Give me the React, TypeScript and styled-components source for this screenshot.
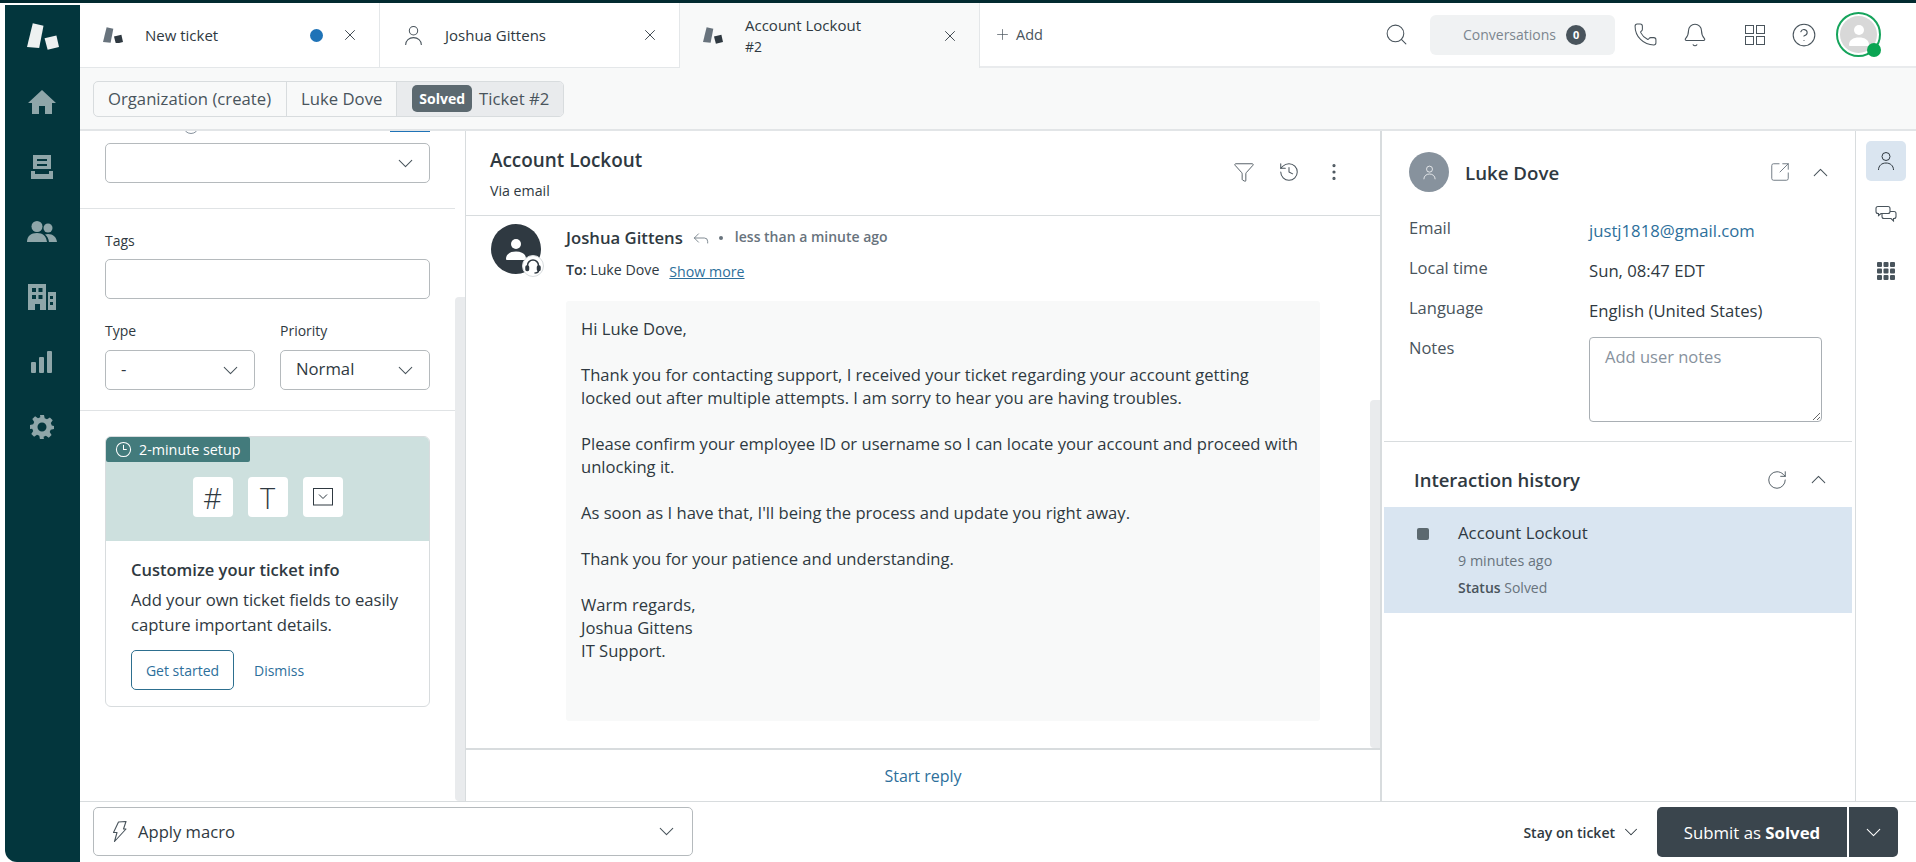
import styled, { createGlobalStyle } from 'styled-components'
import {
  Bell,
  ChevronDown,
  ChevronUp,
  CircleHelp,
  Clock3,
  EllipsisVertical,
  Funnel,
  History,
  Phone,
  Plus,
  Reply,
  RotateCw,
  Search,
  SquareArrowOutUpRight,
  X,
} from 'lucide-react'

const GlobalStyle = createGlobalStyle`
  html, body {
    margin: 0;
    padding: 0;
    background: #fff;
    overflow: hidden;
  }
  * {
    box-sizing: border-box;
  }
  body {
    font-family: 'Open Sans', 'Noto Sans', 'Liberation Sans', sans-serif;
    color: #2f3941;
  }
`

function ZendeskLogo({ size = 20, tall = '#68737d', small = '#2f3941' }) {
  return (
    <svg width={size} height={size * 0.84} viewBox="0 0 31 26">
      <polygon points="5.6,0.3 16,2.7 11.8,24.3 0,23.3" fill={tall} />
      <polygon points="17,14.7 28.5,12 31,23.3 20,26" fill={small} />
    </svg>
  )
}

function PersonIcon({ size = 20, color = '#49545c' }) {
  return (
    <svg width={size} height={size} viewBox="0 0 20 20" fill="none" stroke={color} strokeWidth="1">
      <circle cx="10" cy="5.5" r="4" />
      <path d="M2.5 19c0-4.4 3.3-7 7.5-7s7.5 2.6 7.5 7" />
    </svg>
  )
}

function FourSquares() {
  return (
    <svg width="20" height="20" viewBox="0 0 20 20" fill="none" stroke="#49545c" strokeWidth="1">
      <rect x="0.5" y="0.5" width="8" height="8" />
      <rect x="11.5" y="0.5" width="8" height="8" />
      <rect x="0.5" y="11.5" width="8" height="8" />
      <rect x="11.5" y="11.5" width="8" height="8" />
    </svg>
  )
}

const navFill = '#8fa6a9'

function HomeIcon() {
  return (
    <svg width="30" height="26" viewBox="0 0 30 26" fill={navFill}>
      <path d="M15 1 L29 14 H25 V25 H18 V17 H12 V25 H5 V14 H1 Z" />
    </svg>
  )
}

function ViewsIcon() {
  return (
    <svg width="22" height="24" viewBox="0 0 22 24" fill={navFill}>
      <path d="M2 0h18v14H2z M0 16h4v3h14v-3h4v8H0z" />
      <path d="M6 4h10v2H6zM6 9h10v2H6z" fill="#03363d" />
    </svg>
  )
}

function PeopleIcon() {
  return (
    <svg width="30" height="22" viewBox="0 0 30 22" fill={navFill}>
      <circle cx="10" cy="5.5" r="5.5" />
      <circle cx="21" cy="7" r="4.5" />
      <path d="M0 21c0-6 4-9 10-9s9 3 10 9z" />
      <path d="M21 13c5 0 8.500 3 9 8h-8c-.4-3-1.600-5.500-4-7.400 1-.4 2-.6 3-.6z" />
    </svg>
  )
}

function BuildingIcon() {
  return (
    <svg width="28" height="26" viewBox="0 0 28 26" fill={navFill}>
      <path d="M0 0h18v26h-6v-6H7v6H0z" />
      <path d="M20 8h8v18h-8z" />
      <path
        d="M4 4h4v4H4zM10.500 4h4v4h-4zM4 11h4v4H4zM10.500 11h4v4h-4zM22 12h3v3h-3zM22 18h3v3h-3z"
        fill="#03363d"
      />
    </svg>
  )
}

function BarsIcon() {
  return (
    <svg width="22" height="22" viewBox="0 0 22 22" fill={navFill}>
      <rect x="0" y="11" width="5" height="11" rx="1" />
      <rect x="8" y="6" width="5" height="16" rx="1" />
      <rect x="16" y="0" width="5" height="22" rx="1" />
    </svg>
  )
}

function GearIcon() {
  return (
    <svg width="24" height="24" viewBox="0 0 24 24" fill={navFill}>
      <path
        fillRule="evenodd"
        d="M10 0h4l.7 3.300 2.300 1L19.900 2.400l2.800 2.800-1.900 2.900 1 2.300L24 11v3l-3.300.7-1 2.300 1.900 2.900-2.800 2.800-2.900-1.900-2.300 1L13.900 24h-4l-.6-3.200-2.300-1-2.900 1.900-2.800-2.800 1.900-2.900-1-2.300L0 13.900v-4l3.200-.6 1-2.300-1.900-2.900 2.800-2.800 2.900 1.900 2.300-1zM12 7.500a4.500 4.500 0 1 0 0 9 4.500 4.500 0 0 0 0-9z"
      />
    </svg>
  )
}

function ChatIcon() {
  return (
    <svg width="22" height="22" viewBox="0 0 22 22" fill="none" stroke="#49545c" strokeWidth="1.100">
      <path d="M3 1.500h10c1.200 0 2 .8 2 2v3c0 1.200-.8 2-2 2H6l-2.500 2v-2H3c-1.200 0-2-.8-2-2v-3c0-1.200.8-2 2-2z" />
      <path d="M7 8.500v3c0 1.200.8 2 2 2h7l2.500 2.500v-2.500h.5c1.200 0 2-.8 2-2v-3c0-1.200-.8-2-2-2h-4" />
    </svg>
  )
}

function AppsIcon() {
  return (
    <svg width="18" height="18" viewBox="0 0 18 18" fill="#49545c">
      {[0, 6.5, 13].map((y) =>
        [0, 6.5, 13].map((x) => <rect key={`${x}-${y}`} x={x} y={y} width="5" height="5" rx="1" />),
      )}
    </svg>
  )
}

function HeadsetIcon() {
  return (
    <svg width="16" height="16" viewBox="0 0 16 16" fill="none" stroke="#2f3941" strokeWidth="1.500">
      <path d="M2.500 10V7.500a5.500 5.500 0 0 1 11 0V10" />
      <rect x="1" y="8" width="2.500" height="4.500" rx="1" fill="#2f3941" />
      <rect x="12.500" y="8" width="2.500" height="4.500" rx="1" fill="#2f3941" />
      <path d="M13.500 12.500c0 1.500-1.500 2.500-4 2.500" />
    </svg>
  )
}

function SolidPerson() {
  return (
    <svg width="24" height="24" viewBox="0 0 24 24" fill="#fff">
      <circle cx="12" cy="7" r="5" />
      <path d="M2 22c0-5 4-7.500 10-7.500S22 17 22 22c0 .5-.5 1-1 1H3c-.5 0-1-.5-1-1z" />
    </svg>
  )
}

function TagDropdownIcon() {
  return (
    <svg width="20" height="18" viewBox="0 0 20 18" fill="none" stroke="#2f3941">
      <rect x="0.500" y="0.500" width="19" height="16.500" />
      <path d="M6 6.500l4 4 4-4" />
    </svg>
  )
}

function BoltIcon() {
  return (
    <svg width="15" height="21" viewBox="0 0 15 21" fill="none" stroke="#49545c" strokeWidth="1.100" strokeLinejoin="round">
      <path d="M6.500 1 L14 .5 L11.500 8 L14 8 L2.500 20.500 L5 11.500 L1.500 11.500 Z" />
    </svg>
  )
}

const Chevron = () => <ChevronDown size={25} strokeWidth={1} color="#49545c" />
const CloseIcon = () => <X size={18} strokeWidth={1.200} color="#2f3941" />

function App() {
  return (
    <>
      <GlobalStyle />
      <Page>
        <TopStripe />
        <Frame>
          <Sidebar>
            <LogoSlot>
              <ZendeskLogo size={32} tall="#eef1f1" small="#eef1f1" />
            </LogoSlot>
            <NavItem><HomeIcon /></NavItem>
            <NavItem><ViewsIcon /></NavItem>
            <NavItem><PeopleIcon /></NavItem>
            <NavItem><BuildingIcon /></NavItem>
            <NavItem><BarsIcon /></NavItem>
            <NavItem><GearIcon /></NavItem>
          </Sidebar>

          <Main>
            <Header>
              <Tab>
                <TabIcon><ZendeskLogo /></TabIcon>
                <TabTitle>New ticket</TabTitle>
                <UnreadDot />
                <TabClose><CloseIcon /></TabClose>
              </Tab>
              <Tab>
                <TabIcon><PersonIcon size={21} /></TabIcon>
                <TabTitle>Joshua Gittens</TabTitle>
                <TabClose><CloseIcon /></TabClose>
              </Tab>
              <Tab $active>
                <TabIcon><ZendeskLogo /></TabIcon>
                <TabTitle>
                  Account Lockout
                  <TabSub>#2</TabSub>
                </TabTitle>
                <TabClose><CloseIcon /></TabClose>
              </Tab>
              <AddArea>
                <Plus size={17} strokeWidth={1} color="#49545c" />
                Add
              </AddArea>
              <Tools>
                <ToolSlot $gap={0}><Search size={25} strokeWidth={1} color="#49545c" /></ToolSlot>
                <ConversationsBox>
                  Conversations
                  <CountBadge>0</CountBadge>
                </ConversationsBox>
                <ToolSlot $gap={17}><Phone size={25} strokeWidth={1} color="#49545c" /></ToolSlot>
                <ToolSlot $gap={24}><Bell size={26} strokeWidth={1} color="#49545c" /></ToolSlot>
                <ToolSlot $gap={37} $width={20}><FourSquares /></ToolSlot>
                <ToolSlot $gap={26}><CircleHelp size={26} strokeWidth={1} color="#49545c" /></ToolSlot>
                <AvatarRing>
                  <AvatarCore><SolidPerson /></AvatarCore>
                  <OnlineDot />
                </AvatarRing>
              </Tools>
            </Header>

            <SubBar>
              <Crumbs>
                <Crumb>Organization (create)</Crumb>
                <Crumb>Luke Dove</Crumb>
                <Crumb $current>
                  <StatusPill>Solved</StatusPill>
                  Ticket #2
                </Crumb>
              </Crumbs>
            </SubBar>

            <Body>
              <LeftPanel>
                <LeftContent>
                  <Section $bottom={25}>
                    <ClippedRow>
                      <ClippedCircle />
                      <ClippedLink />
                    </ClippedRow>
                    <SelectBox>
                      <span />
                      <Chevron />
                    </SelectBox>
                  </Section>
                  <Section $top={22} $bottom={20}>
                    <FieldLabel>Tags</FieldLabel>
                    <TextBox />
                    <FieldPair>
                      <div>
                        <FieldLabel>Type</FieldLabel>
                        <SelectBox>
                          <span>-</span>
                          <Chevron />
                        </SelectBox>
                      </div>
                      <div>
                        <FieldLabel>Priority</FieldLabel>
                        <SelectBox>
                          <span>Normal</span>
                          <Chevron />
                        </SelectBox>
                      </div>
                    </FieldPair>
                  </Section>
                  <CardWrap>
                    <Card>
                      <CardHero>
                        <SetupBadge>
                          <Clock3 size={17} strokeWidth={1.500} color="#fff" />
                          2-minute setup
                        </SetupBadge>
                        <Tile>#</Tile>
                        <Tile>T</Tile>
                        <Tile><TagDropdownIcon /></Tile>
                      </CardHero>
                      <CardBody>
                        <CardTitle>Customize your ticket info</CardTitle>
                        <CardText>Add your own ticket fields to easily capture important details.</CardText>
                        <CardActions>
                          <OutlineButton>Get started</OutlineButton>
                          <TextLink>Dismiss</TextLink>
                        </CardActions>
                      </CardBody>
                    </Card>
                  </CardWrap>
                </LeftContent>
                <ScrollTrack $top={166} />
              </LeftPanel>

              <CenterPanel>
                <TicketHead>
                  <div>
                    <TicketTitle>Account Lockout</TicketTitle>
                    <TicketVia>Via email</TicketVia>
                  </div>
                  <TicketActions>
                    <Funnel size={22} strokeWidth={1} color="#49545c" />
                    <History size={22} strokeWidth={1.100} color="#49545c" />
                    <EllipsisVertical size={22} strokeWidth={1.500} color="#49545c" />
                  </TicketActions>
                </TicketHead>
                <Thread>
                  <Message>
                    <SenderAvatar>
                      <SolidPerson />
                      <AgentBadge><HeadsetIcon /></AgentBadge>
                    </SenderAvatar>
                    <MessageMain>
                      <SenderRow>
                        <SenderName>Joshua Gittens</SenderName>
                        <Reply size={20} strokeWidth={1} color="#68737d" />
                        <MetaDot />
                        <SenderMeta>less than a minute ago</SenderMeta>
                      </SenderRow>
                      <RecipientRow>
                        <strong>To:</strong> Luke Dove
                        <ShowMore>Show more</ShowMore>
                      </RecipientRow>
                      <Bubble>
                        <p>Hi Luke Dove,</p>
                        <p>
                          Thank you for contacting support, I received your ticket regarding your account getting
                          <br />
                          locked out after multiple attempts. I am sorry to hear you are having troubles.
                        </p>
                        <p>
                          Please confirm your employee ID or username so I can locate your account and proceed with
                          <br />
                          unlocking it.
                        </p>
                        <p>As soon as I have that, I'll being the process and update you right away.</p>
                        <p>Thank you for your patience and understanding.</p>
                        <p>
                          Warm regards,
                          <br />
                          Joshua Gittens
                          <br />
                          IT Support.
                        </p>
                      </Bubble>
                    </MessageMain>
                  </Message>
                  <ScrollTrack $top={184} />
                </Thread>
                <StartReply>Start reply</StartReply>
              </CenterPanel>

              <RightPanel>
                <ProfileSection>
                  <ProfileHead>
                    <ProfileAvatar><PersonIcon size={15} color="#fff" /></ProfileAvatar>
                    <ProfileName>Luke Dove</ProfileName>
                    <ProfileIcons>
                      <SquareArrowOutUpRight size={22} strokeWidth={1} color="#68737d" />
                      <ChevronUp size={25} strokeWidth={1} color="#49545c" />
                    </ProfileIcons>
                  </ProfileHead>
                  <DetailRow>
                    <DetailLabel>Email</DetailLabel>
                    <DetailLink>justj1818@gmail.com</DetailLink>
                  </DetailRow>
                  <DetailRow>
                    <DetailLabel>Local time</DetailLabel>
                    <DetailValue>Sun, 08:47 EDT</DetailValue>
                  </DetailRow>
                  <DetailRow>
                    <DetailLabel>Language</DetailLabel>
                    <DetailValue>English (United States)</DetailValue>
                  </DetailRow>
                  <NotesRow>
                    <DetailLabel>Notes</DetailLabel>
                    <NotesBox placeholder="Add user notes" />
                  </NotesRow>
                </ProfileSection>
                <HistoryHead>
                  <HistoryTitle>Interaction history</HistoryTitle>
                  <HistoryIcons>
                    <RotateCw size={22} strokeWidth={1} color="#49545c" />
                    <ChevronUp size={25} strokeWidth={1} color="#49545c" />
                  </HistoryIcons>
                </HistoryHead>
                <HistoryItem>
                  <StatusSquare />
                  <div>
                    <HistoryName>Account Lockout</HistoryName>
                    <HistoryTime>9 minutes ago</HistoryTime>
                    <HistoryStatus><strong>Status</strong> Solved</HistoryStatus>
                  </div>
                </HistoryItem>
              </RightPanel>

              <Rail>
                <RailButton $active><PersonIcon size={20} color="#2f3941" /></RailButton>
                <RailButton><ChatIcon /></RailButton>
                <RailButton><AppsIcon /></RailButton>
              </Rail>
            </Body>

            <Footer>
              <MacroBox>
                <BoltIcon />
                <MacroLabel>Apply macro</MacroLabel>
                <Chevron />
              </MacroBox>
              <StayMenu>
                Stay on ticket
                <ChevronDown size={22} strokeWidth={1.100} color="#2f3941" />
              </StayMenu>
              <SubmitButton>
                Submit as&nbsp;<strong>Solved</strong>
              </SubmitButton>
              <SubmitArrow>
                <ChevronDown size={25} strokeWidth={1} color="#fff" />
              </SubmitArrow>
            </Footer>
          </Main>
        </Frame>
      </Page>
    </>
  )
}

export default App

const Page = styled.div`
  width: 1916px;
  height: 862px;
  display: flex;
  flex-direction: column;
  overflow: hidden;
  background: #fff;
`
const TopStripe = styled.div`
  height: 3px;
  flex-shrink: 0;
  background: #022a30;
`
const Frame = styled.div`
  flex: 1;
  min-height: 0;
  display: flex;
  padding-left: 5px;
`
const Sidebar = styled.nav`
  width: 75px;
  flex-shrink: 0;
  margin-top: 2px;
  background: #03363d;
  border-bottom-left-radius: 12px;
  display: flex;
  flex-direction: column;
  align-items: center;
`
const LogoSlot = styled.div`
  height: 55px;
  padding-top: 18px;
  display: flex;
  justify-content: center;
  margin-bottom: 9px;
`
const NavItem = styled.div`
  height: 65px;
  display: flex;
  align-items: center;
  justify-content: center;
  padding-right: 1px;
`
const Main = styled.div`
  flex: 1;
  min-width: 0;
  display: flex;
  flex-direction: column;
`
const Header = styled.header`
  height: 65px;
  flex-shrink: 0;
  display: flex;
`
const Tab = styled.div<{ $active?: boolean }>`
  width: 300px;
  display: flex;
  align-items: center;
  padding: 0 20px 0 23px;
  background: ${(props) => (props.$active ? '#f8f9f9' : '#fff')};
  border-right: 1px solid #e4e7e9;
  border-bottom: ${(props) => (props.$active ? 'none' : '1px solid #e4e7e9')};
`
const TabIcon = styled.div`
  width: 42px;
  display: flex;
  flex-shrink: 0;
`
const TabTitle = styled.div`
  flex: 1;
  line-height: 20px;
  font-weight: 500;
  font-size: 15px;
  color: #2f3941;
`
const TabSub = styled.div`
  margin-top: 2px;
  font-weight: 400;
  font-size: 14px;
`
const UnreadDot = styled.div`
  width: 13px;
  height: 13px;
  border-radius: 50%;
  background: #1f73b7;
  margin-right: 18px;
`
const TabClose = styled.div`
  display: flex;
  width: 18px;
`
const AddArea = styled.div`
  display: flex;
  align-items: center;
  gap: 5px;
  padding-left: 14px;
  width: 125px;
  font-size: 14.500px;
  color: #49545c;
  border-bottom: 2px solid #e9ebed;
`
const Tools = styled.div`
  flex: 1;
  display: flex;
  align-items: center;
  justify-content: flex-end;
  padding: 0 35px 0 0;
  border-bottom: 2px solid #e9ebed;
`
const ToolSlot = styled.div<{ $gap: number; $width?: number }>`
  width: ${(props) => props.$width ?? 26}px;
  display: flex;
  justify-content: center;
  margin-left: ${(props) => props.$gap}px;
`
const ConversationsBox = styled.div`
  width: 185px;
  height: 40px;
  margin-left: 21px;
  border-radius: 6px;
  background: #f0f2f3;
  display: flex;
  align-items: center;
  justify-content: center;
  gap: 10px;
  padding-left: 4px;
  font-size: 14px;
  color: #7c868f;
`
const CountBadge = styled.span`
  width: 20px;
  height: 20px;
  border-radius: 50%;
  background: #49545c;
  color: #fff;
  font-size: 11px;
  font-weight: 700;
  display: flex;
  align-items: center;
  justify-content: center;
`
const AvatarRing = styled.div`
  position: relative;
  width: 45px;
  height: 45px;
  margin-left: 19px;
  border-radius: 50%;
  border: 2px solid #16a45c;
  display: flex;
  align-items: center;
  justify-content: center;
`
const AvatarCore = styled.div`
  width: 37px;
  height: 37px;
  border-radius: 50%;
  background: #d8d8d8;
  display: flex;
  align-items: center;
  justify-content: center;
`
const OnlineDot = styled.div`
  position: absolute;
  right: -2px;
  bottom: -2px;
  width: 14px;
  height: 14px;
  border-radius: 50%;
  background: #0aa553;
`
const SubBar = styled.div`
  height: 63px;
  flex-shrink: 0;
  background: #f8f9f9;
  border-bottom: 2px solid #e2e5e7;
  padding: 13px 13px 0;
`
const Crumbs = styled.div`
  display: inline-flex;
  height: 36px;
  border: 1px solid #d8dcde;
  border-radius: 5px;
  overflow: hidden;
  font-size: 16.700px;
  color: #49545c;
`
const Crumb = styled.div<{ $current?: boolean }>`
  display: flex;
  align-items: center;
  gap: 7px;
  padding: 0 14px 1px ${(props) => (props.$current ? '15px' : '14px')};
  background: ${(props) => (props.$current ? '#e9ebed' : 'transparent')};
  border-right: ${(props) => (props.$current ? 'none' : '1px solid #d8dcde')};
  &:first-child {
    padding-right: 15px;
  }
`
const StatusPill = styled.span`
  height: 27px;
  padding: 0 7px;
  border-radius: 5px;
  background: #5c6970;
  color: #fff;
  font-size: 14px;
  font-weight: 700;
  line-height: 27px;
`
const Body = styled.div`
  flex: 1;
  min-height: 0;
  display: flex;
`
const LeftPanel = styled.aside`
  width: 386px;
  flex-shrink: 0;
  display: flex;
  border-right: 1px solid #d8dcde;
`
const LeftContent = styled.div`
  width: 375px;
  flex-shrink: 0;
`
const Section = styled.div<{ $top?: number; $bottom?: number }>`
  padding: ${(props) => props.$top ?? 0}px 25px ${(props) => props.$bottom ?? 0}px;
  border-bottom: 1px solid #e0e3e5;
`
const ClippedRow = styled.div`
  height: 12px;
  position: relative;
  overflow: hidden;
`
const ClippedCircle = styled.div`
  position: absolute;
  left: 78px;
  top: -13px;
  width: 16px;
  height: 16px;
  border-radius: 50%;
  border: 1px solid #87929d;
`
const ClippedLink = styled.div`
  position: absolute;
  right: 0;
  top: 0;
  width: 40px;
  height: 1px;
  background: #1f73b7;
`
const SelectBox = styled.div`
  height: 40px;
  border: 1px solid #b5babd;
  border-radius: 5px;
  display: flex;
  align-items: center;
  justify-content: space-between;
  padding: 0 11px 0 15px;
  font-size: 16.700px;
  line-height: 20px;
  color: #2f3941;
  span {
    position: relative;
    top: -1px;
  }
`
const TextBox = styled.div`
  height: 40px;
  margin-top: 8px;
  border: 1px solid #b5babd;
  border-radius: 5px;
`
const FieldLabel = styled.div`
  height: 20px;
  line-height: 20px;
  font-size: 14px;
  font-weight: 500;
  color: #2f3941;
`
const FieldPair = styled.div`
  display: grid;
  grid-template-columns: 150px 150px;
  gap: 25px;
  margin-top: 22px;
  ${SelectBox} {
    margin-top: 9px;
  }
`
const CardWrap = styled.div`
  padding: 25px 25px 0;
`
const Card = styled.div`
  border: 1px solid #d8dcde;
  border-radius: 6px;
  overflow: hidden;
`
const CardHero = styled.div`
  position: relative;
  height: 104px;
  background: #cde0de;
  padding-top: 40px;
  display: flex;
  justify-content: center;
  gap: 15px;
`
const SetupBadge = styled.div`
  position: absolute;
  top: 0;
  left: 0;
  width: 144px;
  height: 25px;
  background: #437b7c;
  color: #fff;
  border-radius: 2px;
  font-size: 14.300px;
  display: flex;
  align-items: center;
  gap: 7px;
  padding-left: 9px;
`
const Tile = styled.div`
  width: 40px;
  height: 40px;
  border-radius: 4px;
  background: #fff;
  display: flex;
  align-items: center;
  justify-content: center;
  font-size: 29px;
  font-weight: 300;
  color: #2f3941;
`
const CardBody = styled.div`
  padding: 18px 25px 16px;
`
const CardTitle = styled.div`
  font-size: 16.500px;
  line-height: 22px;
  font-weight: 600;
`
const CardText = styled.div`
  margin-top: 6px;
  font-size: 16.700px;
  line-height: 25px;
  letter-spacing: -0.05px;
  color: #2f3941;
`
const CardActions = styled.div`
  margin-top: 13px;
  display: flex;
  align-items: center;
  gap: 20px;
`
const OutlineButton = styled.div`
  width: 103px;
  height: 40px;
  border: 1px solid #2d6f8f;
  border-radius: 5px;
  display: flex;
  align-items: center;
  justify-content: center;
  font-size: 14px;
  color: #2d6f9b;
`
const TextLink = styled.div`
  font-size: 14px;
  color: #2d6f9b;
`
const ScrollTrack = styled.div<{ $top: number }>`
  width: 10px;
  flex-shrink: 0;
  margin-top: ${(props) => props.$top}px;
  background: #e9ebed;
  border-radius: 4px 0 0 4px;
`
const CenterPanel = styled.main`
  width: 914px;
  flex-shrink: 0;
  display: flex;
  flex-direction: column;
`
const TicketHead = styled.div`
  height: 85px;
  flex-shrink: 0;
  padding: 16px 35px 0 24px;
  display: flex;
  justify-content: space-between;
  border-bottom: 1px solid #d8dcde;
`
const TicketTitle = styled.div`
  font-size: 18.900px;
  line-height: 26px;
  font-weight: 600;
`
const TicketVia = styled.div`
  margin-top: 8px;
  font-size: 14.200px;
  line-height: 20px;
`
const TicketActions = styled.div`
  display: flex;
  gap: 23px;
  padding-top: 14px;
  height: 36px;
`
const Thread = styled.div`
  flex: 1;
  min-height: 0;
  display: flex;
  border-bottom: 2px solid #d8dcde;
`
const Message = styled.div`
  flex: 1;
  display: flex;
  gap: 25px;
  padding: 8px 0 0 25px;
`
const SenderAvatar = styled.div`
  position: relative;
  width: 50px;
  height: 50px;
  border-radius: 50%;
  background: #2f3941;
  display: flex;
  align-items: center;
  justify-content: center;
`
const AgentBadge = styled.div`
  position: absolute;
  right: -3px;
  bottom: -3px;
  width: 22px;
  height: 22px;
  border-radius: 50%;
  background: #fff;
  border: 1px solid #d8dcde;
  display: flex;
  align-items: center;
  justify-content: center;
`
const MessageMain = styled.div`
  width: 754px;
`
const SenderRow = styled.div`
  height: 27px;
  display: flex;
  align-items: center;
`
const SenderName = styled.div`
  font-size: 16.700px;
  font-weight: 600;
  margin-right: 8px;
`
const MetaDot = styled.div`
  width: 4px;
  height: 4px;
  border-radius: 50%;
  background: #68737d;
  margin: 0 12px 0 8px;
`
const SenderMeta = styled.div`
  font-size: 14px;
  font-weight: 600;
  color: #68737d;
  margin-top: -2px;
`
const RecipientRow = styled.div`
  margin-top: 8px;
  height: 22px;
  line-height: 22px;
  font-size: 14.200px;
  strong {
    font-weight: 600;
  }
`
const ShowMore = styled.span`
  margin-left: 10px;
  color: #2d6f9b;
  text-decoration: underline;
  position: relative;
  top: 2px;
`
const Bubble = styled.div`
  margin-top: 20px;
  height: 420px;
  padding: 16px 15px;
  background: #f8f9f9;
  border-radius: 3px;
  font-size: 16.600px;
  line-height: 23px;
  color: #2f3941;
  p {
    margin: 0 0 23px;
  }
`
const StartReply = styled.div`
  height: 51px;
  flex-shrink: 0;
  display: flex;
  align-items: center;
  justify-content: center;
  font-size: 16px;
  color: #2d6f9b;
`
const RightPanel = styled.section`
  width: 476px;
  flex-shrink: 0;
  border-left: 2px solid #d8dcde;
  border-right: 1px solid #d8dcde;
`
const ProfileSection = styled.div`
  height: 311px;
  margin: 0 3px 0 2px;
  padding: 21px 19px 0 25px;
  border-bottom: 1px solid #d8dcde;
`
const ProfileHead = styled.div`
  height: 40px;
  margin-bottom: 19px;
  display: flex;
  align-items: center;
`
const ProfileAvatar = styled.div`
  width: 40px;
  height: 40px;
  border-radius: 50%;
  background: #87929d;
  display: flex;
  align-items: center;
  justify-content: center;
  margin-right: 16px;
`
const ProfileName = styled.div`
  flex: 1;
  font-size: 18.700px;
  font-weight: 600;
`
const ProfileIcons = styled.div`
  display: flex;
  align-items: center;
  gap: 17px;
`
const DetailRow = styled.div`
  height: 40px;
  display: grid;
  grid-template-columns: 180px 1fr;
`
const DetailLabel = styled.div`
  line-height: 34px;
  font-size: 16.500px;
  color: #49545c;
`
const DetailValue = styled.div`
  line-height: 40px;
  font-size: 16.700px;
  color: #2f3941;
`
const DetailLink = styled(DetailValue)`
  color: #2d6f9b;
`
const NotesRow = styled.div`
  display: grid;
  grid-template-columns: 180px 233px;
`
const NotesBox = styled.textarea`
  margin-top: 6px;
  height: 85px;
  width: 233px;
  padding: 7px 15px;
  border: 1px solid #a9afb4;
  border-radius: 4px;
  outline: none;
  font-family: inherit;
  font-size: 16.500px;
  &::placeholder {
    color: #87929d;
    opacity: 1;
  }
`
const HistoryHead = styled.div`
  height: 65px;
  padding: 10px 24px 0 32px;
  display: flex;
  align-items: center;
  justify-content: space-between;
`
const HistoryTitle = styled.div`
  font-size: 18.500px;
  font-weight: 600;
`
const HistoryIcons = styled.div`
  display: flex;
  align-items: center;
  gap: 18px;
`
const HistoryItem = styled.div`
  height: 106px;
  margin: 0 3px 0 2px;
  background: #d9e5f1;
  padding: 14px 0 0 33px;
  display: flex;
  gap: 29px;
`
const StatusSquare = styled.div`
  width: 12px;
  height: 12px;
  margin-top: 7px;
  border-radius: 2px;
  background: #5c6970;
`
const HistoryName = styled.div`
  line-height: 24px;
  font-size: 16.800px;
`
const HistoryTime = styled.div`
  margin-top: 6px;
  line-height: 20px;
  font-size: 14.300px;
  color: #68737d;
`
const HistoryStatus = styled.div`
  margin-top: 7px;
  line-height: 20px;
  font-size: 14px;
  color: #68737d;
  strong {
    font-weight: 600;
    color: #49545c;
  }
`
const Rail = styled.div`
  width: 60px;
  flex-shrink: 0;
  padding-top: 10px;
  display: flex;
  flex-direction: column;
  align-items: center;
  gap: 15px;
`
const RailButton = styled.div<{ $active?: boolean }>`
  width: 40px;
  height: 40px;
  border-radius: 5px;
  background: ${(props) => (props.$active ? '#dae5f0' : 'transparent')};
  display: flex;
  align-items: center;
  justify-content: center;
`
const Footer = styled.footer`
  height: 61px;
  flex-shrink: 0;
  border-top: 1px solid #d8dcde;
  padding: 5px 18px 0 13px;
  display: flex;
  align-items: flex-start;
`
const MacroBox = styled.div`
  width: 600px;
  height: 49px;
  border: 1px solid #b5babd;
  border-radius: 5px;
  display: flex;
  align-items: center;
  padding: 0 13px 0 18px;
  gap: 11px;
`
const MacroLabel = styled.div`
  flex: 1;
  font-size: 16.600px;
`
const StayMenu = styled.div`
  margin-left: auto;
  height: 50px;
  display: flex;
  align-items: center;
  gap: 5px;
  font-size: 14px;
  font-weight: 600;
  margin-right: 15px;
`
const SubmitButton = styled.div`
  width: 190px;
  height: 50px;
  background: #3a454d;
  border-radius: 5px 0 0 5px;
  color: #fff;
  font-size: 16.800px;
  display: flex;
  align-items: center;
  justify-content: center;
  strong {
    font-weight: 700;
  }
`
const SubmitArrow = styled.div`
  width: 49px;
  height: 50px;
  margin-left: 2px;
  background: #3a454d;
  border-radius: 0 5px 5px 0;
  display: flex;
  align-items: center;
  justify-content: center;
`
